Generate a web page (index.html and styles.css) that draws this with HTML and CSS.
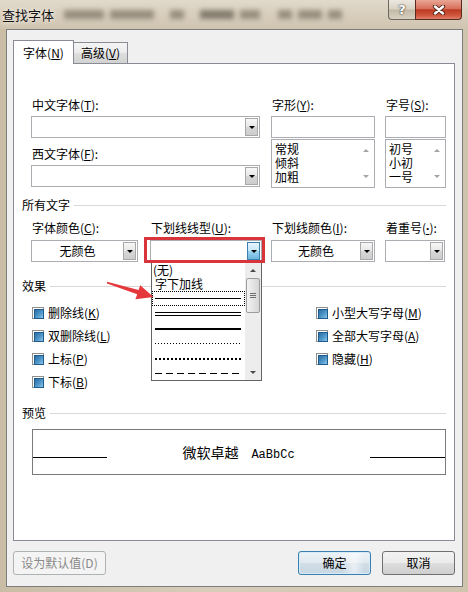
FILE: index.html
```html
<!DOCTYPE html>
<html lang="zh-CN">
<head>
<meta charset="utf-8">
<title>查找字体</title>
<link rel="stylesheet" href="styles.css">
</head>
<body>
<div class="window">
  <header class="titlebar">
    <span class="title">查找字体</span>
    <div class="glass" aria-hidden="true">
      <i></i><i></i><i></i><i></i><i></i><i></i><i></i><i></i>
    </div>
    <div class="caption">
      <span class="cap help">?</span>
      <span class="cap close">
        <svg width="14" height="10" viewBox="0 0 14 10">
          <path d="M3 1.5 L11 8.5 M11 1.5 L3 8.5" stroke="#4a2218" stroke-width="4.2" stroke-linecap="round"/>
          <path d="M3 1.5 L11 8.5 M11 1.5 L3 8.5" stroke="#fff" stroke-width="2.4" stroke-linecap="round"/>
        </svg>
      </span>
    </div>
  </header>

  <main class="client">
    <nav class="tabs">
      <div class="tab active"><span>字体(<u>N</u>)</span></div>
      <div class="tab"><span>高级(<u>V</u>)</span></div>
    </nav>

    <section class="panel">
      <div class="font-row">
        <div class="col col-name">
          <label class="lbl">中文字体(<u>T</u>):</label>
          <div class="combo"><span class="val"></span><span class="drop"></span></div>
          <label class="lbl second">西文字体(<u>F</u>):</label>
          <div class="combo"><span class="val"></span><span class="drop"></span></div>
        </div>
        <div class="col col-style">
          <label class="lbl">字形(<u>Y</u>):</label>
          <div class="edit"></div>
          <div class="list">
            <div class="items"><div>常规</div><div>倾斜</div><div>加粗</div></div>
            <div class="vscroll"><span class="tri up"></span><span class="tri down"></span></div>
          </div>
        </div>
        <div class="col col-size">
          <label class="lbl">字号(<u>S</u>):</label>
          <div class="edit"></div>
          <div class="list">
            <div class="items"><div>初号</div><div>小初</div><div>一号</div></div>
            <div class="vscroll"><span class="tri up"></span><span class="tri down"></span></div>
          </div>
        </div>
      </div>

      <div class="group"><span>所有文字</span></div>
      <div class="text-row">
        <div class="field f-color">
          <label class="lbl">字体颜色(<u>C</u>):</label>
          <div class="combo"><span class="val">无颜色</span><span class="drop"></span></div>
        </div>
        <div class="field f-uline">
          <label class="lbl">下划线线型(<u>U</u>):</label>
          <div class="combo"><span class="val"></span><span class="drop hot"></span></div>
        </div>
        <div class="field f-ucolor">
          <label class="lbl">下划线颜色(<u>I</u>):</label>
          <div class="combo"><span class="val">无颜色</span><span class="drop"></span></div>
        </div>
        <div class="field f-emph">
          <label class="lbl">着重号(<u class="dot">·</u>):</label>
          <div class="combo"><span class="val"></span><span class="drop"></span></div>
        </div>
      </div>

      <div class="group"><span>效果</span></div>
      <div class="effects">
        <label class="check"><i class="box"></i><span>删除线(<u>K</u>)</span></label>
        <label class="check"><i class="box"></i><span>双删除线(<u>L</u>)</span></label>
        <label class="check"><i class="box"></i><span>上标(<u>P</u>)</span></label>
        <label class="check"><i class="box"></i><span>下标(<u>B</u>)</span></label>
        <label class="check"><i class="box"></i><span>小型大写字母(<u>M</u>)</span></label>
        <label class="check"><i class="box"></i><span>全部大写字母(<u>A</u>)</span></label>
        <label class="check"><i class="box"></i><span>隐藏(<u>H</u>)</span></label>
      </div>

      <div class="group"><span>预览</span></div>
      <div class="preview">
        <span class="rule"></span>
        <span class="sample"><span class="cjk">微软卓越</span><span class="latin">AaBbCc</span></span>
        <span class="rule"></span>
      </div>
    </section>

    <footer class="footer">
      <span class="btn btn-disabled">设为默认值(D)</span>
      <span class="btn btn-ok">确定</span>
      <span class="btn btn-cancel">取消</span>
    </footer>
  </main>

  <!-- open drop-down of the underline style combo -->
  <div class="dropdown">
    <div class="dd-items">
      <div class="dd-text">(无)</div>
      <div class="dd-text">字下加线</div>
      <div class="dd-line focus"><span class="ln single"></span></div>
      <div class="dd-line"><span class="ln double"></span></div>
      <div class="dd-line"><span class="ln thick"></span></div>
      <div class="dd-line"><span class="ln dotted"></span></div>
      <div class="dd-line"><span class="ln bold-dotted"></span></div>
      <div class="dd-line"><span class="ln dashed"></span></div>
    </div>
    <div class="dd-scroll">
      <span class="sb-btn"><span class="tri up dark"></span></span>
      <span class="sb-thumb"><span class="grip"></span></span>
      <span class="sb-track"></span>
      <span class="sb-btn"><span class="tri down dark"></span></span>
    </div>
  </div>

  <!-- red callout frame and arrow -->
  <div class="hilite"></div>
  <svg class="pointer" width="60" height="30" viewBox="0 0 60 30">
    <polygon points="7,6.8 38.6,15 40.2,10.2 53.5,22 35.4,24.2 37.2,19.2 7,8.6" fill="#e5383c"/>
  </svg>
</div>
</body>
</html>
```

FILE: styles.css
```css
* { box-sizing: border-box; }

html, body {
  margin: 0;
  padding: 0;
}

body {
  width: 468px;
  height: 592px;
  overflow: hidden;
  font-family: "Noto Sans CJK SC", "Noto Sans", sans-serif;
  font-size: 12px;
  color: #000;
  background: #d0c5b0;
}

u { text-decoration: underline; text-underline-offset: 1px; }
u.dot { font-family: "Noto Sans", sans-serif; font-weight: bold; }

.window {
  position: relative;
  width: 468px;
  height: 592px;
  background: linear-gradient(90deg, #c9bda6 0%, #d7cdba 45%, #cfc4ae 100%);
}

/* ---------- title bar ---------- */
.titlebar {
  display: flex;
  align-items: flex-start;
  height: 29px;
  background: linear-gradient(#e1d9cb, #d6ccba 60%, #cfc4b0);
}

.title {
  padding: 6px 0 0 2px;
  font-size: 13px;
  line-height: 17px;
  color: #111;
  text-shadow: 0 0 5px #f4efe6, 0 0 3px #f4efe6;
  position: relative;
  z-index: 1;
}

.glass {
  flex: 1;
  display: flex;
  align-items: center;
  height: 28px;
  padding-left: 10px;
  filter: blur(2.4px);
  opacity: .6;
}
.glass i {
  display: block;
  height: 9px;
  background: #6f6558;
  margin-right: 6px;
}
.glass i:nth-child(1) { width: 40px; }
.glass i:nth-child(2) { width: 44px; }
.glass i:nth-child(3) { width: 14px; margin-left: 10px; }
.glass i:nth-child(4) { width: 34px; margin-left: 10px; background: #4d463d; }
.glass i:nth-child(5) { width: 20px; }
.glass i:nth-child(6) { width: 14px; margin-left: 12px; }
.glass i:nth-child(7) { width: 24px; }
.glass i:nth-child(8) { width: 14px; }

.caption {
  display: flex;
  margin-right: 6px;
}
.cap {
  height: 20px;
  display: flex;
  align-items: center;
  justify-content: center;
}
.help {
  width: 27px;
  border: 1px solid #6e675d;
  border-top: none;
  border-right: none;
  border-radius: 0 0 0 4px;
  background: linear-gradient(#ece8e0, #d9d2c4 48%, #c2b8a6 52%, #d8d0c0);
  color: #fff;
  font-family: "DejaVu Sans", sans-serif;
  font-size: 13px;
  font-weight: bold;
  text-shadow: 0 0 2px #3a352d, 0 0 1px #3a352d;
}
.close {
  width: 47px;
  border: 1px solid #5a2a20;
  border-top: none;
  border-radius: 0 0 4px 0;
  background: linear-gradient(#eaa696, #d6705b 45%, #bd3a22 52%, #cf553c 80%, #de8068);
}

/* ---------- client area ---------- */
.client {
  margin: 0 5px 0 6px;
  height: 558px;
  padding: 10px 7px 0 6px;
  background: #f0f0f0;
  border: 1px solid #7d7d7d;
}

.tabs {
  display: flex;
  align-items: flex-end;
  height: 23px;
}
.tab {
  width: 55px;
  height: 21px;
  margin-left: -1px;
  display: flex;
  align-items: center;
  justify-content: center;
  line-height: 16px;
  border: 1px solid #898c95;
  border-bottom: none;
  background: linear-gradient(#f4f4f4, #ebebeb 50%, #dedede 51%, #d2d2d2);
}
.tab.active {
  width: 61px;
  height: 24px;
  margin-left: 0;
  margin-bottom: -1px;
  padding-top: 1px;
  position: relative;
  z-index: 1;
  background: #fff;
}

.panel {
  height: 478px;
  padding: 0 8px;
  background: #fff;
  border: 1px solid #898c95;
}

.lbl {
  display: block;
  height: 16px;
  line-height: 16px;
  padding-left: 1px;
  white-space: nowrap;
}

/* combo box with drop-down button */
.combo {
  display: flex;
  height: 22px;
  border: 1px solid #abadb3;
  background: #fff;
}
.combo .val {
  flex: 1;
  display: flex;
  align-items: center;
  justify-content: center;
  line-height: 16px;
}
.drop {
  width: 13px;
  margin: 1px 1px 1px 0;
  display: flex;
  align-items: center;
  justify-content: center;
  border: 1px solid #a9a9a9;
  background: linear-gradient(#f7f7f7, #e6e6e6 50%, #d6d6d6 51%, #cdcdcd);
}
.drop::after {
  content: "";
  border-left: 3px solid transparent;
  border-right: 3px solid transparent;
  border-top: 3px solid #000;
}
.drop.hot {
  border-color: #3c7fb1;
  background: linear-gradient(#e7f5fc, #c6e6f7 50%, #9dd3ef 51%, #6db7de);
}

/* ---------- font name / style / size ---------- */
.font-row {
  display: flex;
  margin: 33px 0 0 9px;
}
.col-name { width: 229px; margin-right: 11px; }
.col-style { width: 104px; margin-right: 10px; }
.col-size { width: 61px; }
.col .lbl { margin-bottom: 3px; }
.col .lbl.second { margin-top: 8px; }

.edit {
  height: 22px;
  border: 1px solid #abadb3;
  background: #fff;
}
.list {
  display: flex;
  height: 49px;
  margin-top: 1px;
  border: 1px solid #abadb3;
  background: #fff;
}
.list .items {
  flex: 1;
  padding: 2px 0 0 3px;
  line-height: 14px;
}
.vscroll {
  width: 17px;
  display: flex;
  flex-direction: column;
  justify-content: space-between;
  align-items: center;
  padding: 9px 0 9px;
}

.tri {
  display: block;
  width: 0;
  height: 0;
  border-left: 3px solid transparent;
  border-right: 3px solid transparent;
}
.tri.up { border-bottom: 3px solid #a3a3a3; }
.tri.down { border-top: 3px solid #a3a3a3; }
.tri.up.dark { border-bottom-color: #4a4a4a; }
.tri.down.dark { border-top-color: #4a4a4a; }

/* ---------- group headings ---------- */
.group {
  display: flex;
  align-items: center;
  height: 16px;
  line-height: 16px;
  margin-top: 9px;
  white-space: nowrap;
}
.group::after {
  content: "";
  flex: 1;
  height: 1px;
  margin-left: 4px;
  background: #d9d9d9;
}

/* ---------- text colour / underline row ---------- */
.text-row {
  display: flex;
  margin: 7px 0 0 9px;
}
.field .lbl { margin-bottom: 4px; }
.f-color { width: 107px; margin-right: 12px; }
.f-uline { width: 112px; margin-right: 9px; }
.f-ucolor { width: 104px; margin-right: 10px; }
.f-emph { width: 60px; }

.text-row + .group { margin-top: 16px; }

/* ---------- effects ---------- */
.effects {
  display: grid;
  grid-template-columns: 284px auto;
  grid-template-rows: repeat(4, 23px);
  grid-auto-flow: column;
  margin: 7px 0 0 10px;
}
.check {
  display: flex;
  align-items: center;
  gap: 4px;
  line-height: 16px;
  white-space: nowrap;
}
.box {
  width: 12px;
  height: 12px;
  padding: 1px;
  border: 1px solid #8e8f8f;
  background: #fff;
}
.box::before {
  content: "";
  display: block;
  width: 8px;
  height: 8px;
  border: 1px solid #1f5b8c;
  background: linear-gradient(135deg, #2a6da4, #4f97c9 55%, #8cc6ea);
}

.effects + .group { margin-top: 12px; }

/* ---------- preview ---------- */
.preview {
  display: flex;
  align-items: flex-start;
  width: 414px;
  height: 46px;
  margin: 8px 0 0 10px;
  border: 1px solid #7a7a7a;
}
.rule {
  width: 74px;
  height: 1px;
  margin-top: 27px;
  background: #000;
}
.rule:last-child { width: 75px; }
.sample {
  flex: 1;
  display: flex;
  justify-content: center;
  align-items: baseline;
  gap: 13px;
  margin-top: 14px;
}
.sample .cjk {
  font-size: 14px;
  line-height: 16px;
}
.sample .latin {
  font-family: "Liberation Mono", monospace;
  font-size: 12px;
  line-height: 16px;
}

/* ---------- dialog buttons ---------- */
.footer {
  display: flex;
  margin-top: 10px;
}
.btn {
  height: 24px;
  display: flex;
  align-items: center;
  justify-content: center;
  border-radius: 3px;
  line-height: 16px;
}
.btn-disabled {
  width: 93px;
  border: 1px solid #adb2b5;
  background: #f4f4f4;
  color: #8a8a8a;
}
.btn-ok {
  width: 73px;
  margin-left: auto;
  border: 1px solid #3c7fb1;
  background: linear-gradient(90deg, rgba(255,255,255,0) 60%, rgba(255,255,255,.55) 78%, rgba(255,255,255,0) 92%),
              linear-gradient(#eef4f8, #e0e9ef 50%, #d1dee7 51%, #c8d7e2);
  box-shadow: inset 0 0 0 1px #d6ecf8;
}
.btn-cancel {
  width: 73px;
  margin-left: 11px;
  border: 1px solid #707070;
  background: linear-gradient(#f2f2f2, #ebebeb 50%, #dddddd 51%, #cfcfcf);
}

/* ---------- open drop-down list ---------- */
.dropdown {
  position: absolute;
  left: 151px;
  top: 262px;
  width: 111px;
  height: 119px;
  display: flex;
  border: 1px solid #646464;
  background: #fff;
  z-index: 2;
}
.dd-items {
  flex: 1;
}
.dd-text {
  height: 14px;
  line-height: 14px;
  padding-left: 3px;
  white-space: nowrap;
}
.dd-text:first-child { padding-left: 1px; }
.dd-line {
  height: 15px;
  display: flex;
  align-items: center;
  padding: 0 4px 0 3px;
}
.dd-line.focus {
  outline: 1px dotted #000;
  outline-offset: -1px;
}
.ln {
  flex: 1;
  display: block;
}
.ln.single { height: 1px; background: #000; }
.ln.double { height: 4px; border-top: 1px solid #000; border-bottom: 1px solid #000; }
.ln.thick { height: 2px; background: #000; }
.ln.dotted { height: 1px; background: repeating-linear-gradient(90deg, #000 0 1px, transparent 1px 3px); }
.ln.bold-dotted { height: 2px; background: repeating-linear-gradient(90deg, #000 0 2px, transparent 2px 4px); }
.ln.dashed { height: 1px; background: repeating-linear-gradient(90deg, #000 0 7px, transparent 7px 11px); }

.dd-scroll {
  width: 16px;
  display: flex;
  flex-direction: column;
  background: #ededed;
}
.sb-btn {
  height: 15px;
  display: flex;
  align-items: center;
  justify-content: center;
}
.sb-thumb {
  height: 35px;
  margin: 0 1px;
  display: flex;
  align-items: center;
  justify-content: center;
  border: 1px solid #9c9c9c;
  border-radius: 2px;
  background: linear-gradient(90deg, #f3f3f3, #e4e4e4 50%, #d6d6d6);
}
.grip {
  width: 6px;
  height: 5px;
  border-top: 1px solid #6e6e6e;
  border-bottom: 1px solid #6e6e6e;
  background: linear-gradient(#6e6e6e, #6e6e6e) center / 100% 1px no-repeat;
}
.sb-track { flex: 1; }

/* callout frame around the underline style combo */
.hilite {
  position: absolute;
  left: 144px;
  top: 237px;
  width: 121px;
  height: 26px;
  border: 3px solid #d8343c;
  z-index: 3;
}
.pointer {
  position: absolute;
  left: 100px;
  top: 275px;
  z-index: 3;
}
```
